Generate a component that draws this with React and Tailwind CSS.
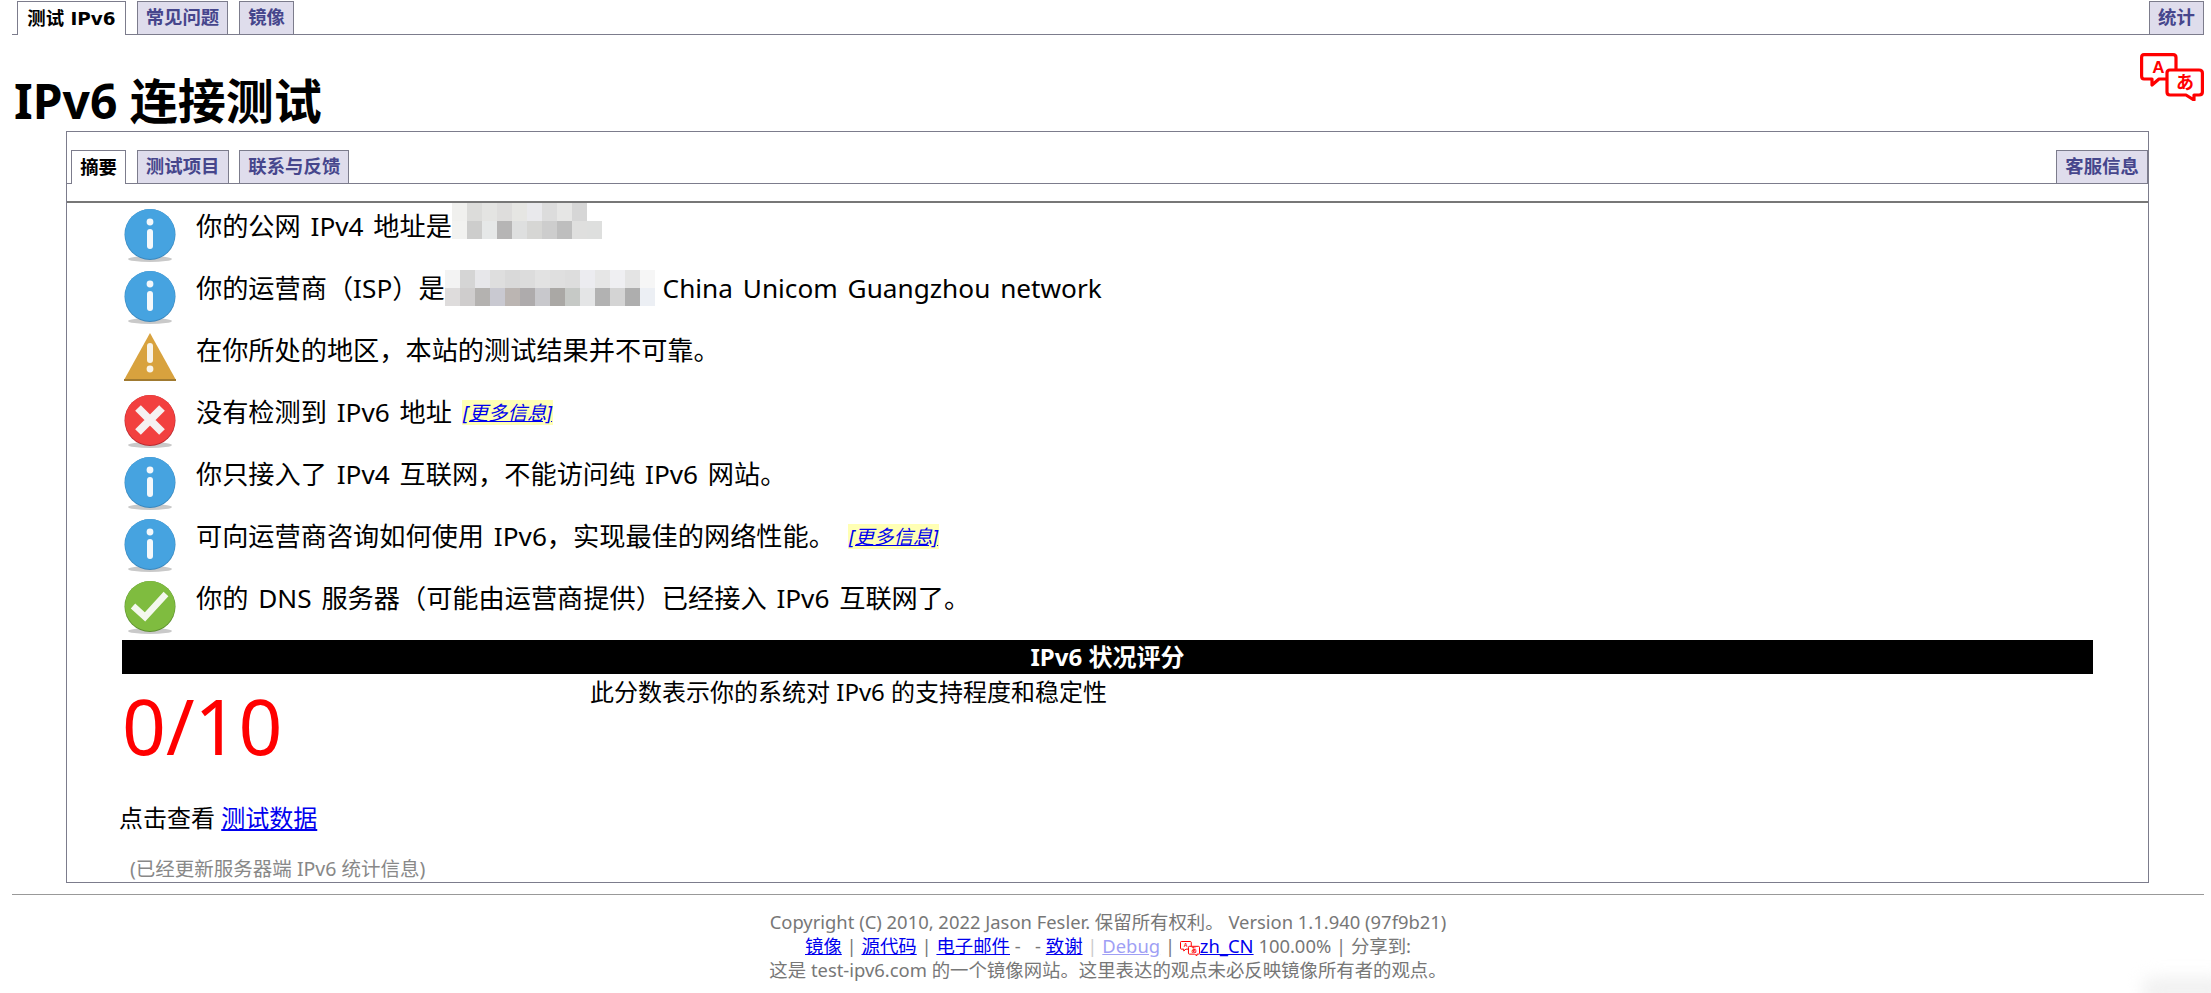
import React from 'react';

const sans = "font-['Noto_Sans','Noto_Sans_CJK_SC',sans-serif]";

const Tab = ({ children, active, className = '' }) => (
  <a
    className={`flex items-center justify-center h-[33px] px-[8.2px] border border-b-0 border-[#7c7c8c] text-[18.4px] font-bold font-['DejaVu_Sans','Noto_Sans_CJK_SC',sans-serif] ${
      active ? 'bg-white text-black h-[34px] -mb-px' : 'bg-[#dfddec] text-[#46468c]'
    } ${className}`}
  >
    {children}
  </a>
);

const Shadow = () => <ellipse cx="26" cy="50" rx="22" ry="3" fill="#c9c9c9" />;

const InfoIcon = () => (
  <svg width="52" height="54" viewBox="0 0 52 54" className="shrink-0">
    <Shadow />
    <circle cx="26" cy="25.5" r="25.5" fill="#3a87bd" />
    <circle cx="26" cy="25" r="25" fill="#46a3e0" />
    <circle cx="26" cy="13" r="3.4" fill="#f4f8fb" />
    <rect x="23" y="20" width="6" height="20" rx="3" fill="#f4f8fb" />
  </svg>
);

const WarnIcon = () => (
  <svg width="52" height="48" viewBox="0 0 52 48" className="shrink-0">
    <path d="M26 0 L52 47 L0 47 Z" fill="#d8a23e" />
    <rect x="0" y="46" width="52" height="2" fill="#a07a30" />
    <rect x="23" y="10" width="6" height="20" rx="3" fill="#f8f4ea" />
    <circle cx="26" cy="36" r="3.4" fill="#f8f4ea" />
  </svg>
);

const ErrorIcon = () => (
  <svg width="52" height="54" viewBox="0 0 52 54" className="shrink-0">
    <Shadow />
    <circle cx="26" cy="25.5" r="25.5" fill="#b8292f" />
    <circle cx="26" cy="25" r="25" fill="#f2403f" />
    <path d="M14 13 L38 37 M38 13 L14 37" stroke="#f6f0f0" strokeWidth="8" />
  </svg>
);

const OkIcon = () => (
  <svg width="52" height="54" viewBox="0 0 52 54" className="shrink-0">
    <Shadow />
    <circle cx="26" cy="25.5" r="25.5" fill="#5c8f2e" />
    <circle cx="26" cy="25" r="25" fill="#7fbc3f" />
    <path d="M9 25 L21 36 L42 13" fill="none" stroke="#f4f8ee" strokeWidth="6.5" />
  </svg>
);

const TranslateIcon = ({ size = 64 }) => (
  <svg width={size} height={size * 0.75} viewBox="0 0 64 48" className="inline-block">
    <g fill="#fff" stroke="#f00" strokeWidth="3.2" strokeLinejoin="round">
      <path d="M4 1.6 H33 Q36 1.6 36 4.5 V23 Q36 26 33 26 H19 L12 32 V26 H4 Q1.6 26 1.6 23 V4.5 Q1.6 1.6 4 1.6 Z" />
      <path d="M30 17 H59 Q62.4 17 62.4 20 V39 Q62.4 42 59 42 H54 V47 L46 42 H30 Q27 42 27 39 V20 Q27 17 30 17 Z" />
    </g>
    <text x="18.5" y="20" textAnchor="middle" fontSize="17" fontWeight="700" fill="#f00" className="font-['Liberation_Sans',sans-serif]">A</text>
    <text x="45" y="36" textAnchor="middle" fontSize="18" fontWeight="700" fill="#f00" className="font-['Noto_Sans_CJK_JP',sans-serif]">あ</text>
  </svg>
);

const mosaic1 = [
  ['bg-[#f0f0ee]', 'bg-[#dcdcda]', 'bg-[#e4e4e2]', 'bg-[#dedddc]', 'bg-[#e6e6e3]', 'bg-[#e9e9ec]', 'bg-[#dcdcdc]', 'bg-[#e6e6e5]', 'bg-[#d6d6d6]', 'bg-white'],
  ['bg-[#f2f2f0]', 'bg-[#cdcdcc]', 'bg-[#e6e8e8]', 'bg-[#b6b5b5]', 'bg-[#dedfdf]', 'bg-[#d6d6d4]', 'bg-[#cdcdcd]', 'bg-[#bebebe]', 'bg-[#dfdfde]', 'bg-[#dedfde]'],
];

const mosaic2 = [
  ['bg-[#f3f3f3]', 'bg-[#d5d5d5]', 'bg-[#e7e7ea]', 'bg-[#dedede]', 'bg-[#d9d9d9]', 'bg-[#dcdcdc]', 'bg-[#e2e2e2]', 'bg-[#dfdfdf]', 'bg-[#ddd]', 'bg-[#ececf0]', 'bg-[#e6e6e6]', 'bg-[#efeff2]', 'bg-[#e4e4e4]', 'bg-[#f6f6f6]'],
  ['bg-[#dedcdc]', 'bg-[#cfcdcd]', 'bg-[#b4b2b0]', 'bg-[#c9c9d1]', 'bg-[#bbb5b2]', 'bg-[#aeabac]', 'bg-[#c8c8cc]', 'bg-[#aaa8a5]', 'bg-[#c6c9c6]', 'bg-[#e4e5e6]', 'bg-[#b2b2b2]', 'bg-[#d4d4d4]', 'bg-[#aeaeae]', 'bg-[#eceff4]'],
];

const Mosaic = ({ cells, className }) => (
  <span className={`inline-flex flex-col blur-[0.5px] ${className}`}>
    {cells.map((row, i) => (
      <span key={i} className="flex">
        {row.map((c, j) => (
          <span key={j} className={`w-[15px] h-[18px] ${c}`} />
        ))}
      </span>
    ))}
  </span>
);

const MoreInfo = ({ className = '' }) => (
  <a className={`inline-block text-[19.5px] leading-[25px] [word-spacing:0] italic underline text-[#0000ee] bg-[#ffffb4] px-px ${className}`}>[更多信息]</a>
);

const rows = [
  {
    icon: <InfoIcon />,
    text: (
      <>
        你的公网 IPv4 地址是
        <Mosaic cells={mosaic1} className="-mt-[10px]" />
      </>
    ),
  },
  {
    icon: <InfoIcon />,
    text: (
      <>
        你的运营商（ISP）是
        <Mosaic cells={mosaic2} className="mr-[8px]" />
        China Unicom Guangzhou network
      </>
    ),
  },
  { icon: <WarnIcon />, text: '在你所处的地区，本站的测试结果并不可靠。' },
  {
    icon: <ErrorIcon />,
    text: (
      <>
        没有检测到 IPv6 地址 <MoreInfo />
      </>
    ),
  },
  { icon: <InfoIcon />, text: '你只接入了 IPv4 互联网，不能访问纯 IPv6 网站。' },
  {
    icon: <InfoIcon />,
    text: (
      <>
        可向运营商咨询如何使用 IPv6，实现最佳的网络性能。 <MoreInfo className="ml-[3px]" />
      </>
    ),
  },
  { icon: <OkIcon />, text: '你的 DNS 服务器（可能由运营商提供）已经接入 IPv6 互联网了。' },
];

export default function App() {
  return (
    <div className={`relative bg-white text-black h-[993px] overflow-hidden ${sans}`}>
      {/* Top tabs */}
      <nav className="ml-[12px] mr-[7px] pt-px h-[35px] flex gap-[10.5px] pl-[5px] border-b border-[#7c7c8c]">
        <Tab active className="w-[109px]">测试 IPv6</Tab>
        <Tab>常见问题</Tab>
        <Tab>镜像</Tab>
        <div className="ml-auto">
          <Tab>统计</Tab>
        </div>
      </nav>

      <div className="relative pt-[30px] h-[96px]">
        <div className="absolute right-[7px] top-[18px]">
          <TranslateIcon />
        </div>
        <h1 className="ml-[14px] text-[48px] leading-[72px] font-bold">IPv6 连接测试</h1>
      </div>

      {/* Main box */}
      <div className="ml-[66px] mr-[62px] h-[752px] border border-[#7c7c8c]">
        <div className="flex gap-[10.5px] h-[33px] mt-[18px] pl-[4px]">
          <Tab active>摘要</Tab>
          <Tab>测试项目</Tab>
          <Tab>联系与反馈</Tab>
          <div className="ml-auto">
            <Tab>客服信息</Tab>
          </div>
        </div>
        <div className="h-[20px] border-t border-b-2 border-t-[#7c7c8c] border-b-[#777]" />

        <div className="ml-[55px] mr-[55px] mt-[5px] flex flex-col gap-[10px]">
          {rows.map((row, i) => (
            <div key={i} className="flex h-[52px]">
              <div className="w-[74px] shrink-0 pl-[2px] pt-px">{row.icon}</div>
              <div className="flex items-center h-[36px] text-[26.2px] leading-[36px] [word-spacing:3px] whitespace-pre">{row.text}</div>
            </div>
          ))}
        </div>

        <div className="ml-[55px] mr-[55px] mt-[8px] h-[34px] bg-black text-white text-center text-[24px] leading-[34px] font-bold">
          IPv6 状况评分
        </div>
        <div className="ml-[55px] mr-[55px] flex h-[100px]">
          <div className="w-[468px] text-[76.8px] leading-[104px] text-[#f00]">0/10</div>
          <div className="text-[24px] leading-[36px]">此分数表示你的系统对 IPv6 的支持程度和稳定性</div>
        </div>

        <div className="ml-[52px] mt-[26px] text-[24px] leading-[36px]">
          点击查看 <a className="text-[#0000ee] underline">测试数据</a>
        </div>
        <div className="ml-[63px] mt-[18px] text-[19.5px] leading-[30px] text-[#888]">(已经更新服务器端 IPv6 统计信息)</div>
      </div>

      {/* Footer */}
      <div className="ml-[12px] mr-[7px] mt-[11px] border-t border-[#999] pt-[15px] text-center text-[18.4px] leading-[24px] text-[#777]">
        <div>Copyright (C) 2010, 2022 Jason Fesler. 保留所有权利。 Version 1.1.940 (97f9b21)</div>
        <div>
          <a className="text-[#0000ee] underline">镜像</a> | <a className="text-[#0000ee] underline">源代码</a> |{' '}
          <a className="text-[#0000ee] underline">电子邮件</a> - &nbsp; - <a className="text-[#0000ee] underline">致谢</a>{' '}
          <span className="text-[#ccc]">|</span> <a className="text-[#9f9ff5] underline">Debug</a> |{' '}
          <TranslateIcon size={20} />
          <a className="text-[#0000ee] underline">zh_CN</a> 100.00% | 分享到:
        </div>
        <div>这是 test-ipv6.com 的一个镜像网站。这里表达的观点未必反映镜像所有者的观点。</div>
      </div>

      {/* smudge in the bottom right corner of the capture */}
      <div className="absolute -right-[20px] -bottom-[10px] w-[90px] h-[26px] rounded-full bg-[#f1f1f1] blur-[8px]" />
    </div>
  );
}
